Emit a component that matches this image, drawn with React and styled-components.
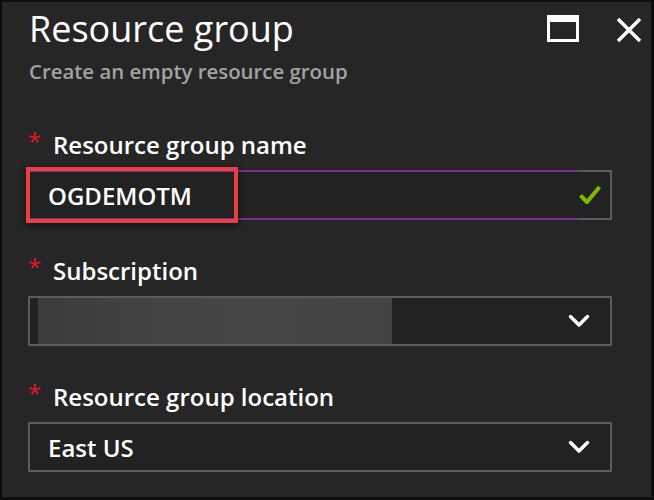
import styled, {createGlobalStyle} from 'styled-components';

const GlobalStyle = createGlobalStyle`
  html, body {
    margin: 0;
    padding: 0;
    background: #0d0d0d;
  }
  body {
    font-family: 'Open Sans', 'Noto Sans', 'DejaVu Sans', sans-serif;
  }
`;

//Dark frame around the blade
const Frame = styled.div`
  width: 654px;
  height: 500px;
  box-sizing: border-box;
  padding: 2px 3px 3px 2px;
`;

const Blade = styled.section`
  height: 100%;
  box-sizing: border-box;
  background: #262626;
  padding: 5px 39px 0 26px;
  display: flex;
  flex-direction: column;
`;

const Header = styled.header`
  display: flex;
  justify-content: space-between;
  align-items: flex-start;
  margin-right: -30px;
`;

const Title = styled.h1`
  margin: 0;
  font-size: 36px;
  line-height: 44px;
  font-weight: 400;
  color: #ffffff;
  padding-left: 1px;
`;

const Subtitle = styled.p`
  margin: 8px 0 0;
  font-size: 20.4px;
  line-height: 25px;
  font-weight: 600;
  color: #a3a3a3;
  padding-left: 1px;
`;

const Controls = styled.div`
  display: flex;
  gap: 37px;
  padding-top: 8px;
`;

const ControlButton = styled.button`
  border: 0;
  padding: 0;
  background: none;
  display: flex;
  margin-top: ${({$offset}) => $offset || 0}px;
  cursor: pointer;
`;

const Form = styled.form`
  margin-top: 46px;
  display: flex;
  flex-direction: column;
  gap: 36px;
`;

const Field = styled.div`
  display: flex;
  flex-direction: column;
  gap: 10px;
`;

const Label = styled.label`
  display: flex;
  font-size: 24px;
  line-height: 30px;
  font-weight: 600;
  color: #ffffff;
`;

const Required = styled.span`
  width: 25px;
  flex: none;
  color: #e0162b;
  font-size: 24px;
  line-height: 24px;
  font-weight: 400;
  margin-top: -1px;
`;

const Box = styled.div`
  position: relative;
  height: 50px;
  box-sizing: border-box;
  border: 2px solid #5c5c5c;
  background: #222222;
  display: flex;
  align-items: center;
  justify-content: space-between;
  padding: 0 ${({$trail}) => $trail}px 0 18px;
  font-size: 24px;
  font-weight: 600;
  color: #ffffff;

  //validated input gets the purple edges
  ${({$valid}) =>
    $valid &&
    `
    &::before, &::after {
      content: '';
      position: absolute;
      left: -2px;
      width: 551px;
      height: 2px;
      background: #7d2d94;
    }
    &::before { top: -2px; }
    &::after { bottom: -2px; }
  `}
`;

//Red annotation drawn over the entered name
const Highlight = styled.span`
  position: absolute;
  left: -4px;
  top: -5px;
  width: 212px;
  height: 56px;
  box-sizing: border-box;
  border: 4px solid #e8423f;
  box-shadow: 0 2px 6px rgba(0, 0, 0, 0.6);
  pointer-events: none;
  z-index: 1;
`;

//Blurred subscription name
const Redacted = styled.span`
  align-self: stretch;
  width: 354px;
  margin-left: -10px;
  background: linear-gradient(
    90deg,
    #3b3b3b 0%,
    #424242 25%,
    #474747 60%,
    #434343 100%
  );
`;

const Chevron = () => (
  <svg width="22" height="14" viewBox="0 0 22 14">
    <polyline
      points="2.5,2.5 11,11 19.5,2.5"
      fill="none"
      stroke="#ffffff"
      strokeWidth="3.5"
      strokeLinecap="round"
      strokeLinejoin="round"
    />
  </svg>
);

const Check = () => (
  <svg width="24" height="22" viewBox="0 0 24 22">
    <polyline
      points="2.5,11.5 9,18 21.5,3"
      fill="none"
      stroke="#7fba00"
      strokeWidth="4"
      strokeLinejoin="round"
    />
  </svg>
);

const Maximize = () => (
  <svg width="32" height="27" viewBox="0 0 32 27">
    <rect x="1.5" y="1.5" width="29" height="24" fill="none" stroke="#fff" strokeWidth="3" />
    <rect x="0" y="0" width="32" height="7" fill="#fff" />
  </svg>
);

const Close = () => (
  <svg width="26" height="26" viewBox="0 0 26 26">
    <path d="M2 2L24 24M24 2L2 24" stroke="#fff" strokeWidth="3.5" />
  </svg>
);

export default function App() {
  return (
    <>
      <GlobalStyle />
      <Frame>
        <Blade>
          <Header>
            <div>
              <Title>Resource group</Title>
              <Subtitle>Create an empty resource group</Subtitle>
            </div>
            <Controls>
              <ControlButton type="button" aria-label="Maximize">
                <Maximize />
              </ControlButton>
              <ControlButton type="button" aria-label="Close" $offset={2}>
                <Close />
              </ControlButton>
            </Controls>
          </Header>

          <Form>
            <Field>
              <Label>
                <Required>*</Required>
                Resource group name
              </Label>
              <Box $valid $trail={8}>
                <Highlight />
                <span>OGDEMOTM</span>
                <Check />
              </Box>
            </Field>

            <Field>
              <Label>
                <Required>*</Required>
                Subscription
              </Label>
              <Box $trail={20}>
                <Redacted />
                <Chevron />
              </Box>
            </Field>

            <Field>
              <Label>
                <Required>*</Required>
                Resource group location
              </Label>
              <Box $trail={20}>
                <span>East US</span>
                <Chevron />
              </Box>
            </Field>
          </Form>
        </Blade>
      </Frame>
    </>
  );
}
